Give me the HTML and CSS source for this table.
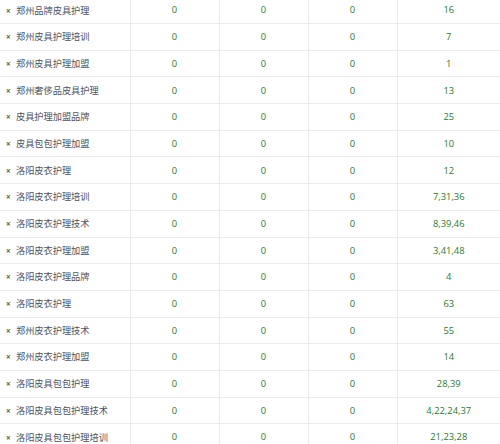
FILE: index.html
```html
<!DOCTYPE html>
<html lang="zh">
<head>
<meta charset="utf-8">
<link rel="stylesheet" href="styles.css">
</head>
<body>
<table class="kw">
<colgroup><col class="c-name"><col class="c-n"><col class="c-n"><col class="c-n"><col class="c-last"></colgroup>
<tbody>
<tr><td class="name"><span class="x">×</span>郑州品牌皮具护理</td><td>0</td><td>0</td><td>0</td><td>16</td></tr>
<tr><td class="name"><span class="x">×</span>郑州皮具护理培训</td><td>0</td><td>0</td><td>0</td><td>7</td></tr>
<tr><td class="name"><span class="x">×</span>郑州皮具护理加盟</td><td>0</td><td>0</td><td>0</td><td>1</td></tr>
<tr><td class="name"><span class="x">×</span>郑州奢侈品皮具护理</td><td>0</td><td>0</td><td>0</td><td>13</td></tr>
<tr><td class="name"><span class="x">×</span>皮具护理加盟品牌</td><td>0</td><td>0</td><td>0</td><td>25</td></tr>
<tr><td class="name"><span class="x">×</span>皮具包包护理加盟</td><td>0</td><td>0</td><td>0</td><td>10</td></tr>
<tr><td class="name"><span class="x">×</span>洛阳皮衣护理</td><td>0</td><td>0</td><td>0</td><td>12</td></tr>
<tr><td class="name"><span class="x">×</span>洛阳皮衣护理培训</td><td>0</td><td>0</td><td>0</td><td>7,31,36</td></tr>
<tr><td class="name"><span class="x">×</span>洛阳皮衣护理技术</td><td>0</td><td>0</td><td>0</td><td>8,39,46</td></tr>
<tr><td class="name"><span class="x">×</span>洛阳皮衣护理加盟</td><td>0</td><td>0</td><td>0</td><td>3,41,48</td></tr>
<tr><td class="name"><span class="x">×</span>洛阳皮衣护理品牌</td><td>0</td><td>0</td><td>0</td><td>4</td></tr>
<tr><td class="name"><span class="x">×</span>洛阳皮衣护理</td><td>0</td><td>0</td><td>0</td><td>63</td></tr>
<tr><td class="name"><span class="x">×</span>郑州皮衣护理技术</td><td>0</td><td>0</td><td>0</td><td>55</td></tr>
<tr><td class="name"><span class="x">×</span>郑州皮衣护理加盟</td><td>0</td><td>0</td><td>0</td><td>14</td></tr>
<tr><td class="name"><span class="x">×</span>洛阳皮具包包护理</td><td>0</td><td>0</td><td>0</td><td>28,39</td></tr>
<tr><td class="name"><span class="x">×</span>洛阳皮具包包护理技术</td><td>0</td><td>0</td><td>0</td><td>4,22,24,37</td></tr>
<tr><td class="name"><span class="x">×</span>洛阳皮具包包护理培训</td><td>0</td><td>0</td><td>0</td><td>21,23,28</td></tr>
</tbody>
</table>
</body>
</html>
```
FILE: styles.css
```css
html, body {
  margin: 0;
  padding: 0;
  background: #ffffff;
}
body {
  font-family: "Open Sans", "Noto Sans CJK SC", sans-serif;
  font-size: 9.4px;
  overflow: hidden;
}
.kw {
  width: 500px;
  border-collapse: collapse;
  table-layout: fixed;
  margin-top: -3.7px;
}
.c-name { width: 130px; }
.c-n { width: 89px; }
.c-last { width: 103px; }
.kw td {
  height: 26.69px;
  padding: 0;
  box-sizing: border-box;
  border: 1px solid #ebebeb;
  text-align: center;
  vertical-align: middle;
  color: #2a7a2e;
  font-weight: 500;
  line-height: 1;
}
.kw td:first-child { border-left: none; }
.kw td:last-child { border-right: none; }
.kw td.name {
  text-align: left;
  padding-left: 6px;
  color: #4c5260;
  font-weight: 400;
  font-family: "Noto Sans CJK SC", sans-serif;
  font-size: 9.2px;
}
.x {
  display: inline-block;
  width: 10px;
  color: #3f6a44;
  font-family: "Open Sans", sans-serif;
  font-weight: 700;
  font-size: 8px;
}
```
